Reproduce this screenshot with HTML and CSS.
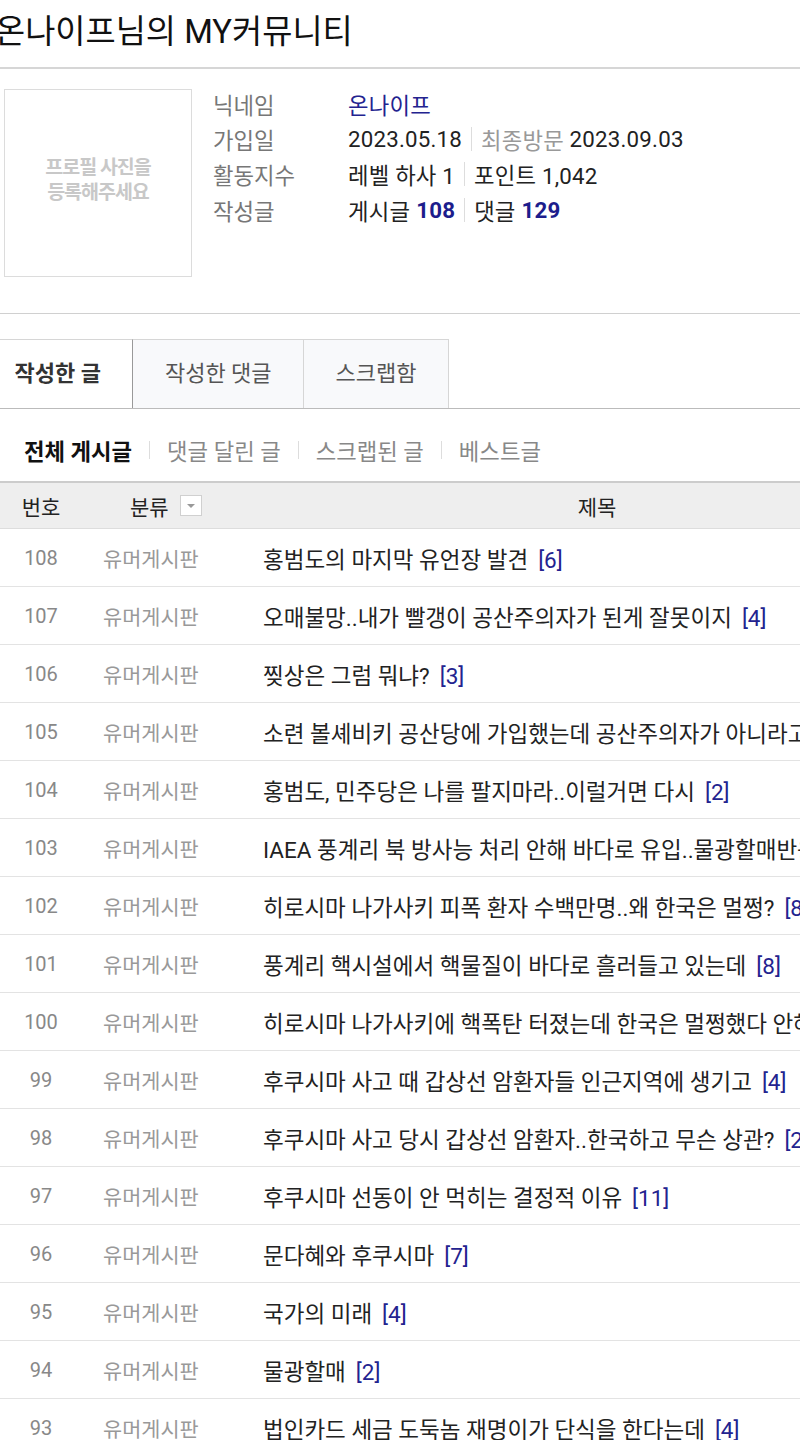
FILE: index.html
```html
<!DOCTYPE html>
<html lang="ko">
<head>
    <meta charset="UTF-8">
    <meta name="viewport" content="width=device-width, initial-scale=1.0">
    <title>온나이프님의 MY커뮤니티</title>
    <link rel="stylesheet" href="styles.css">
</head>
<body>
    <div class="page">
        <h1 class="title">온나이프님의 MY커뮤니티</h1>

        <div class="profile">
            <div class="photo">프로필 사진을<br>등록해주세요</div>
            <dl class="info">
                <dt>닉네임</dt>
                <dd><span class="nick">온나이프</span></dd>
                <dt>가입일</dt>
                <dd>2023.05.18<span class="bar"></span><span class="muted">최종방문</span>&nbsp;2023.09.03</dd>
                <dt>활동지수</dt>
                <dd>레벨 하사 1<span class="bar"></span>포인트 1,042</dd>
                <dt>작성글</dt>
                <dd>게시글 <b class="num">108</b><span class="bar"></span>댓글 <b class="num">129</b></dd>
            </dl>
        </div>

        <ul class="tabs">
            <li class="tab active">작성한 글</li>
            <li class="tab">작성한 댓글</li>
            <li class="tab">스크랩함</li>
        </ul>

        <div class="subtabs">
            <span class="on">전체 게시글</span>
            <span class="sep"></span>
            <span>댓글 달린 글</span>
            <span class="sep"></span>
            <span>스크랩된 글</span>
            <span class="sep"></span>
            <span>베스트글</span>
        </div>

        <div class="board">
            <div class="row head">
                <div class="c-no">번호</div>
                <div class="c-cat">분류 <span class="drop"></span></div>
                <div class="c-title">제목</div>
            </div>
            <div class="row"><div class="c-no">108</div><div class="c-cat">유머게시판</div><div class="c-title">홍범도의 마지막 유언장 발견<span class="cnt">[6]</span></div></div>
            <div class="row"><div class="c-no">107</div><div class="c-cat">유머게시판</div><div class="c-title">오매불망..내가 빨갱이 공산주의자가 된게 잘못이지<span class="cnt">[4]</span></div></div>
            <div class="row"><div class="c-no">106</div><div class="c-cat">유머게시판</div><div class="c-title">찢상은 그럼 뭐냐?<span class="cnt">[3]</span></div></div>
            <div class="row"><div class="c-no">105</div><div class="c-cat">유머게시판</div><div class="c-title">소련 볼셰비키 공산당에 가입했는데 공산주의자가 아니라고?<span class="cnt">[5]</span></div></div>
            <div class="row"><div class="c-no">104</div><div class="c-cat">유머게시판</div><div class="c-title">홍범도, 민주당은 나를 팔지마라..이럴거면 다시<span class="cnt">[2]</span></div></div>
            <div class="row"><div class="c-no">103</div><div class="c-cat">유머게시판</div><div class="c-title">IAEA 풍계리 북 방사능 처리 안해 바다로 유입..물광할매반응<span class="cnt">[3]</span></div></div>
            <div class="row"><div class="c-no">102</div><div class="c-cat">유머게시판</div><div class="c-title">히로시마 나가사키 피폭 환자 수백만명..왜 한국은 멀쩡?<span class="cnt">[8]</span></div></div>
            <div class="row"><div class="c-no">101</div><div class="c-cat">유머게시판</div><div class="c-title">풍계리 핵시설에서 핵물질이 바다로 흘러들고 있는데<span class="cnt">[8]</span></div></div>
            <div class="row"><div class="c-no">100</div><div class="c-cat">유머게시판</div><div class="c-title">히로시마 나가사키에 핵폭탄 터졌는데 한국은 멀쩡했다 안해<span class="cnt">[4]</span></div></div>
            <div class="row"><div class="c-no">99</div><div class="c-cat">유머게시판</div><div class="c-title">후쿠시마 사고 때 갑상선 암환자들 인근지역에 생기고<span class="cnt">[4]</span></div></div>
            <div class="row"><div class="c-no">98</div><div class="c-cat">유머게시판</div><div class="c-title">후쿠시마 사고 당시 갑상선 암환자..한국하고 무슨 상관?<span class="cnt">[2]</span></div></div>
            <div class="row"><div class="c-no">97</div><div class="c-cat">유머게시판</div><div class="c-title">후쿠시마 선동이 안 먹히는 결정적 이유<span class="cnt">[11]</span></div></div>
            <div class="row"><div class="c-no">96</div><div class="c-cat">유머게시판</div><div class="c-title">문다혜와 후쿠시마<span class="cnt">[7]</span></div></div>
            <div class="row"><div class="c-no">95</div><div class="c-cat">유머게시판</div><div class="c-title">국가의 미래<span class="cnt">[4]</span></div></div>
            <div class="row"><div class="c-no">94</div><div class="c-cat">유머게시판</div><div class="c-title">물광할매<span class="cnt">[2]</span></div></div>
            <div class="row"><div class="c-no">93</div><div class="c-cat">유머게시판</div><div class="c-title">법인카드 세금 도둑놈 재명이가 단식을 한다는데<span class="cnt">[4]</span></div></div>
        </div>
    </div>
</body>
</html>
```

FILE: styles.css
```css
html, body {
    margin: 0;
    overflow: hidden;
    background: #fff;
}
body {
    font-family: Roboto, "Noto Sans CJK KR", sans-serif;
    color: #222;
}
.page {
    width: 962px;
}
.title {
    margin: 0 0 0 -5px;
    height: 67px;
    font-size: 32.8px;
    font-weight: 400;
    line-height: 64px;
    color: #111;
    border-bottom: 2px solid #d6d6d6;
}

/* profile */
.profile {
    display: flex;
    padding: 20px 0 0 4px;
    height: 224px;
    border-bottom: 1px solid #d0d0d0;
}
.photo {
    width: 186px;
    height: 180px;
    padding-bottom: 6px;
    border: 1px solid #dcdcdc;
    display: flex;
    align-items: center;
    justify-content: center;
    text-align: center;
    font-size: 19.5px;
    font-weight: 700;
    line-height: 25px;
    color: #c8c8c8;
    letter-spacing: -1px;
}
.info {
    margin: -3px 0 0 21px;
    display: grid;
    grid-template-columns: 135px auto;
    grid-auto-rows: 35.3px;
    align-items: center;
    font-size: 22.3px;
}
.info dt {
    color: #777;
}
.info dd {
    margin: 0;
    display: flex;
    align-items: center;
    white-space: nowrap;
    letter-spacing: 0.2px;
}
.nick {
    color: #23238f;
}
.muted {
    color: #999;
}
.num {
    color: #1d1d8c;
    font-weight: 700;
    margin-left: 6px;
}
.bar {
    display: inline-block;
    width: 1px;
    height: 24px;
    background: #ddd;
    margin: 0 9px;
}

/* tabs */
.tabs {
    list-style: none;
    margin: 25px 0 0 -17px;
    padding: 0;
    display: flex;
    height: 69px;
    border-bottom: 1px solid #bbb;
}
.tab {
    padding: 0 31.5px;
    line-height: 68px;
    font-size: 22px;
    color: #555;
    background: #f8f9fb;
    border: 1px solid #d6d6d6;
    border-bottom: none;
    border-left: none;
}
.tab.active {
    background: #fff;
    color: #333;
    font-weight: 700;
    border-right: 1px solid #999;
}

/* sub tabs */
.subtabs {
    display: flex;
    align-items: center;
    height: 72px;
    padding: 10px 0 0 24px;
    box-sizing: border-box;
    font-size: 22.3px;
    color: #888;
}
.subtabs .on {
    color: #111;
    font-weight: 700;
}
.subtabs .sep {
    width: 1px;
    height: 18px;
    background: #ddd;
    margin: 0 17px;
}

/* board */
.board {
    border-top: 2px solid #ccc;
}
.row {
    display: grid;
    grid-template-columns: 82px 150px 1fr;
    height: 57px;
    align-items: center;
    border-bottom: 1px solid #e3e3e3;
    font-size: 22.5px;
    white-space: nowrap;
}
.row.head {
    height: 45px;
    background: #eee;
    border-bottom: 1px solid #ddd;
    color: #222;
    font-size: 21px;
}
.c-no {
    text-align: center;
    color: #888;
    font-size: 20px;
}
.c-cat {
    padding-left: 21px;
    color: #999;
    font-size: 20.8px;
}
.c-title {
    padding-left: 31px;
    color: #222;
    overflow: hidden;
}
.head .c-no,
.head .c-cat,
.head .c-title {
    color: #222;
    font-size: 21px;
}
.head .c-cat {
    padding-left: 48px;
    display: flex;
    align-items: center;
}
.head .c-title {
    padding-left: 0;
    text-align: center;
}
.drop {
    position: relative;
    display: inline-block;
    width: 20px;
    height: 19px;
    margin-left: 11px;
    background: #fff;
    border: 1px solid #d0d0d0;
}
.drop::after {
    content: "";
    position: absolute;
    left: 6px;
    top: 8px;
    border-left: 4px solid transparent;
    border-right: 4px solid transparent;
    border-top: 4px solid #999;
}
.cnt {
    color: #23238f;
    margin-left: 10px;
}
```
